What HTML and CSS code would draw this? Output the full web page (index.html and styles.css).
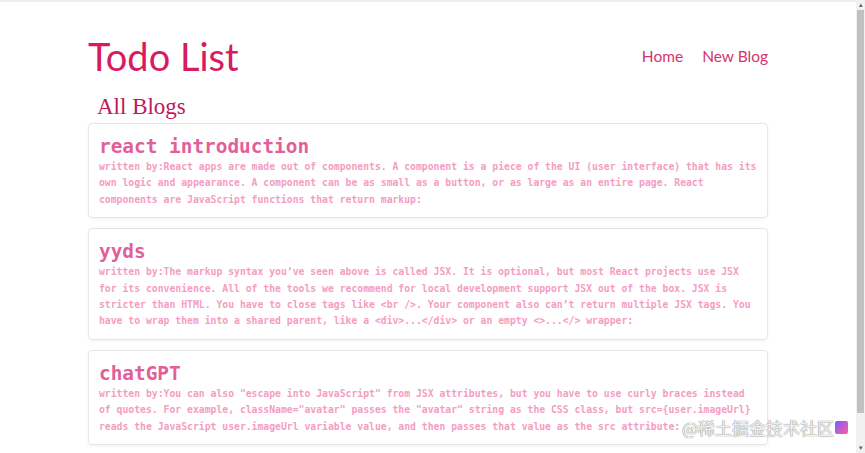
FILE: index.html
```html
<!DOCTYPE html>
<html lang="en">
<head>
  <meta charset="UTF-8" />
  <meta name="viewport" content="width=device-width, initial-scale=1" />
  <title>Todo List</title>
  <link rel="stylesheet" href="styles.css">
</head>
<body>

  <div class="page">
    <div class="app">
      <nav class="navbar">
        <h1>Todo List</h1>
        <div class="links">
          <a href="#">Home</a>
          <a href="#">New Blog</a>
        </div>
      </nav>

      <div class="content">
        <h2 class="list-title">All Blogs</h2>

        <div class="blog-preview">
          <h2>react introduction</h2>
          <p>written by:React apps are made out of components. A component is a piece of the UI (user interface) that has its own logic and appearance. A component can be as small as a button, or as large as an entire page. React components are JavaScript functions that return markup:</p>
        </div>

        <div class="blog-preview">
          <h2>yyds</h2>
          <p>written by:The markup syntax you’ve seen above is called JSX. It is optional, but most React projects use JSX for its convenience. All of the tools we recommend for local development support JSX out of the box. JSX is stricter than HTML. You have to close tags like &lt;br /&gt;. Your component also can’t return multiple JSX tags. You have to wrap them into a shared parent, like a &lt;div&gt;...&lt;/div&gt; or an empty &lt;&gt;...&lt;/&gt; wrapper:</p>
        </div>

        <div class="blog-preview">
          <h2>chatGPT</h2>
          <p>written by:You can also "escape into JavaScript" from JSX attributes, but you have to use curly braces instead of quotes. For example, className="avatar" passes the "avatar" string as the CSS class, but src={user.imageUrl} reads the JavaScript user.imageUrl variable value, and then passes that value as the src attribute:</p>
        </div>
      </div>
    </div>

    <!-- watermark -->
    <div class="watermark">@稀土掘金技术社区<span class="wm-logo"></span></div>
  </div>

  <!-- fake scrollbar (screenshot shows one) -->
  <div class="scrollbar">
    <div class="arrow">▴</div>
    <div class="thumb"></div>
    <div class="arrow">▾</div>
  </div>

</body>
</html>
```

FILE: styles.css
```css
body {
  margin: 0;
  display: flex;
  height: 453px;
  overflow: hidden;
  font-family: "Open Sans", sans-serif;
  background: #fff;
}
.page {
  flex: 1;
  position: relative;
  border-top: 2px solid #eeeeee;
  overflow: hidden;
}
.app {
  max-width: 680px;
  margin: 0 auto;
}
.navbar {
  display: flex;
  align-items: center;
  padding: 28px 0 0;
  height: 52px;
}
.navbar h1 {
  margin: 0;
  font-family: Lato, sans-serif;
  font-weight: normal;
  font-size: 38px;
  line-height: 52px;
  color: #d81b60;
}
.links {
  margin-left: auto;
  display: flex;
  gap: 19px;
}
.links a {
  font-family: Lato, sans-serif;
  font-size: 15.5px;
  color: #d6336c;
  text-decoration: none;
}
.content {
  padding-top: 10px;
}
.list-title {
  margin: 0 0 1px 9px;
  font-family: "Liberation Serif", serif;
  font-weight: normal;
  font-size: 23px;
  line-height: 30px;
  color: #c2185b;
}
.blog-preview {
  padding: 10px 10px 9px;
  margin-bottom: 10px;
  border: 1px solid #e6e6e6;
  border-radius: 4px;
  box-shadow: 0 1px 3px rgba(0,0,0,0.06);
}
.blog-preview h2 {
  margin: 0;
  font-family: "DejaVu Sans Mono", monospace;
  font-size: 19.4px;
  line-height: 25px;
  color: #e2609a;
}
.blog-preview p {
  margin: 0;
  font-family: "DejaVu Sans Mono", monospace;
  font-size: 9.75px;
  line-height: 16.4px;
  font-weight: 600;
  color: #f59dc2;
}
.watermark {
  position: absolute;
  right: 8px;
  bottom: 13px;
  font-family: "Noto Sans CJK SC", sans-serif;
  font-size: 17px;
  color: rgba(255,255,255,0.9);
  text-shadow: 0 0 1px #888, 0 0 1px #888;
  display: flex;
  align-items: center;
  gap: 1px;
}
.wm-logo {
  width: 13px;
  height: 13px;
  background: linear-gradient(135deg, #7b5cff, #ff5fa2);
  border-radius: 2px;
}
.scrollbar {
  width: 9px;
  background: #f1f1f1;
  display: flex;
  flex-direction: column;
}
.arrow {
  height: 10px;
  font-size: 7px;
  line-height: 10px;
  text-align: center;
  color: #606060;
}
.thumb {
  flex: 1;
  margin: 0 1px 30px;
  background: #c1c1c1;
}
```
